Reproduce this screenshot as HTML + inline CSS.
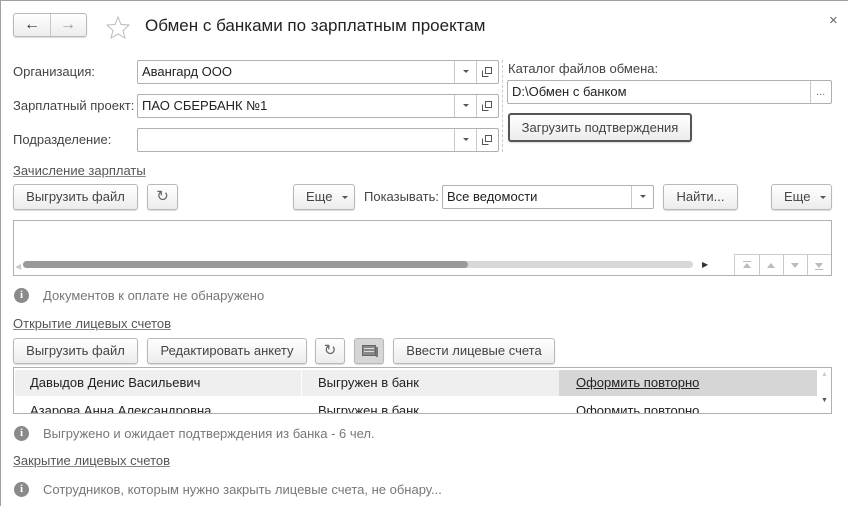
<!DOCTYPE html>
<html><head><meta charset="utf-8"><style>
*{box-sizing:border-box;margin:0;padding:0}
body{width:848px;height:506px;background:#fff;font-family:"Liberation Sans",Arial,sans-serif;font-size:13px;color:#333;position:relative;overflow:hidden;border-left:1px solid #a0a0a0;border-top:1px solid #a0a0a0}
.a{position:absolute}
.lbl{position:absolute;color:#444;font-size:13px;line-height:16px}
.inp{position:absolute;border:1px solid #b0b0b0;border-radius:2px;background:#fff;height:24px;line-height:22px;padding-left:4px;color:#222}
.btn{position:absolute;border:1px solid #b8b8b8;border-radius:3px;background:linear-gradient(#fff,#ececec);height:26px;line-height:24px;text-align:center;color:#444;box-shadow:0 1px 1px rgba(0,0,0,.15)}
.sep{position:absolute;top:0;bottom:0;border-left:1px solid #c8c8c8}
.dd{position:absolute;top:9px;width:0;height:0;border-left:3px solid transparent;border-right:3px solid transparent;border-top:3px solid #555}
.link{position:absolute;color:#555;text-decoration:underline;text-decoration-color:#888;font-size:13px}
.info{position:absolute;width:15px;height:15px;border-radius:50%;background:#8a8a8a;color:#fff;font-size:11px;font-weight:bold;text-align:center;line-height:15px;font-family:"Liberation Serif",serif}
.itext{position:absolute;color:#777;font-size:13px}
.copy{position:absolute;top:6px;width:10px;height:10px}
</style></head><body>
<div class="btn" style="left:12px;top:12px;width:74px;height:24px;line-height:22px">
 <div class="sep" style="left:36px"></div>
 <span class="a" style="left:10px;top:0;font-size:16px;color:#333">&#8592;</span>
 <span class="a" style="left:46px;top:0;font-size:16px;color:#999">&#8594;</span>
</div>
<svg class="a" style="left:104px;top:14px" width="26" height="24" viewBox="0 0 26 24"><polygon points="13,2 16,9.5 24,10 18,15.5 20,23 13,19 6,23 8,15.5 2,10 10,9.5" fill="none" stroke="#bbb" stroke-width="1"/></svg>
<div class="a" style="left:144px;top:15px;font-size:17px;color:#222">Обмен с банками по зарплатным проектам</div>
<div class="a" style="left:828px;top:11px;font-size:15px;color:#666">×</div>

<div class="lbl" style="left:12px;top:63px">Организация:</div>
<div class="lbl" style="left:12px;top:97px">Зарплатный проект:</div>
<div class="lbl" style="left:12px;top:131px">Подразделение:</div>

<div class="inp" style="left:136px;top:59px;width:362px">Авангард ООО<div class="sep" style="left:316px"></div><div class="dd" style="left:325px"></div><div class="sep" style="left:338px"></div><svg class="copy" style="left:344px" viewBox="0 0 10 10"><rect x="3.5" y="0.5" width="6" height="6" fill="none" stroke="#555"/><path d="M0.5 3.5v6h6" fill="none" stroke="#555"/></svg></div>
<div class="inp" style="left:136px;top:93px;width:362px">ПАО СБЕРБАНК №1<div class="sep" style="left:316px"></div><div class="dd" style="left:325px"></div><div class="sep" style="left:338px"></div><svg class="copy" style="left:344px" viewBox="0 0 10 10"><rect x="3.5" y="0.5" width="6" height="6" fill="none" stroke="#555"/><path d="M0.5 3.5v6h6" fill="none" stroke="#555"/></svg></div>
<div class="inp" style="left:136px;top:127px;width:362px"><div class="sep" style="left:316px"></div><div class="dd" style="left:325px"></div><div class="sep" style="left:338px"></div><svg class="copy" style="left:344px" viewBox="0 0 10 10"><rect x="3.5" y="0.5" width="6" height="6" fill="none" stroke="#555"/><path d="M0.5 3.5v6h6" fill="none" stroke="#555"/></svg></div>

<div class="a" style="left:501px;top:59px;height:92px;border-left:1px dashed #ccc"></div>
<div class="lbl" style="left:507px;top:60px">Каталог файлов обмена:</div>
<div class="inp" style="left:506px;top:79px;width:325px">D:\Обмен с банком<div class="sep" style="left:302px"></div><span class="a" style="left:308px;top:0;color:#777;font-size:11px">...</span></div>
<div class="btn" style="left:507px;top:112px;width:184px;height:29px;line-height:25px;border:2px solid #555;border-radius:3px">Загрузить подтверждения</div>

<div class="link" style="left:12px;top:162px">Зачисление зарплаты</div>
<div class="btn" style="left:12px;top:183px;width:125px">Выгрузить файл</div>
<div class="btn" style="left:146px;top:183px;width:31px;font-size:15px;color:#666">&#8635;</div>
<div class="btn" style="left:292px;top:183px;width:62px;text-align:left;padding-left:12px">Еще<div class="dd" style="left:48px;top:11px"></div></div>
<div class="lbl" style="left:363px;top:188px">Показывать:</div>
<div class="inp" style="left:441px;top:184px;width:212px">Все ведомости<div class="sep" style="left:188px"></div><div class="dd" style="left:197px"></div></div>
<div class="btn" style="left:662px;top:183px;width:75px">Найти...</div>
<div class="btn" style="left:770px;top:183px;width:61px;text-align:left;padding-left:12px">Еще<div class="dd" style="left:48px;top:11px"></div></div>

<div class="a" style="left:12px;top:219px;width:819px;height:56px;border:1px solid #b0b0b0"></div>
<div class="a" style="left:14px;top:261px;color:#ccc;font-size:8px">&#9664;</div>
<div class="a" style="left:22px;top:260px;width:670px;height:7px;border-radius:4px;background:#d8d8d8"></div>
<div class="a" style="left:22px;top:260px;width:445px;height:7px;border-radius:4px;background:#999"></div>
<div class="a" style="left:701px;top:259px;color:#333;font-size:8px">&#9654;</div>
<div class="a" style="left:733px;top:253px;width:97px;height:21px;border-left:1px solid #ccc;border-top:1px solid #ccc">
 <div class="sep" style="left:24px"></div><div class="sep" style="left:48px"></div><div class="sep" style="left:72px"></div>
 <svg class="a" style="left:0;top:0" width="97" height="21"><g fill="#bbb"><rect x="8" y="6" width="8" height="1"/><polygon points="12,8 8,13 16,13"/><polygon points="36,8 32,13 40,13"/><polygon points="56,8 64,8 60,13"/><polygon points="80,8 88,8 84,13"/><rect x="80" y="14" width="8" height="1"/></g></svg>
</div>

<div class="info" style="left:13px;top:287px">i</div>
<div class="itext" style="left:42px;top:287px">Документов к оплате не обнаружено</div>

<div class="link" style="left:12px;top:315px">Открытие лицевых счетов</div>
<div class="btn" style="left:12px;top:337px;width:125px">Выгрузить файл</div>
<div class="btn" style="left:146px;top:337px;width:160px">Редактировать анкету</div>
<div class="btn" style="left:314px;top:337px;width:30px;font-size:15px;color:#666">&#8635;</div>
<div class="btn" style="left:353px;top:337px;width:30px;background:#d6d6d6"><svg class="a" style="left:7px;top:6px" width="16" height="13"><rect x="0.5" y="0.5" width="13" height="10" fill="#888" stroke="#666"/><rect x="2" y="3" width="10" height="1" fill="#ddd"/><rect x="2" y="6" width="10" height="1" fill="#ddd"/><rect x="14" y="2" width="2" height="10" fill="#777"/></svg></div>
<div class="btn" style="left:392px;top:337px;width:162px">Ввести лицевые счета</div>

<div class="a" style="left:12px;top:366px;width:819px;height:47px;border:1px solid #b0b0b0;overflow:hidden">
 <div class="a" style="left:1px;top:2px;width:802px;height:26px;background:#efefef"></div>
 <div class="a" style="left:545px;top:2px;width:258px;height:26px;background:#d6d6d6"></div>
 <div class="a" style="left:287px;top:2px;height:26px;border-left:1px solid #fff"></div>
 <div class="a" style="left:16px;top:7px;color:#222">Давыдов Денис Васильевич</div>
 <div class="a" style="left:304px;top:7px;color:#222">Выгружен в банк</div>
 <div class="a" style="left:562px;top:7px;color:#222;text-decoration:underline">Оформить повторно</div>
 <div class="a" style="left:16px;top:35px;color:#222">Азарова Анна Александровна</div>
 <div class="a" style="left:304px;top:35px;color:#222">Выгружен в банк</div>
 <div class="a" style="left:562px;top:35px;color:#222">Оформить повторно</div>
 <div class="a" style="left:807px;top:3px;color:#ccc;font-size:7px">&#9650;</div>
 <div class="a" style="left:807px;top:29px;color:#555;font-size:7px">&#9660;</div>
</div>

<div class="info" style="left:13px;top:425px">i</div>
<div class="itext" style="left:42px;top:425px">Выгружено и ожидает подтверждения из банка - 6 чел.</div>
<div class="link" style="left:12px;top:452px">Закрытие лицевых счетов</div>
<div class="info" style="left:13px;top:481px">i</div>
<div class="itext" style="left:42px;top:481px">Сотрудников, которым нужно закрыть лицевые счета, не обнару...</div>
</body></html>
